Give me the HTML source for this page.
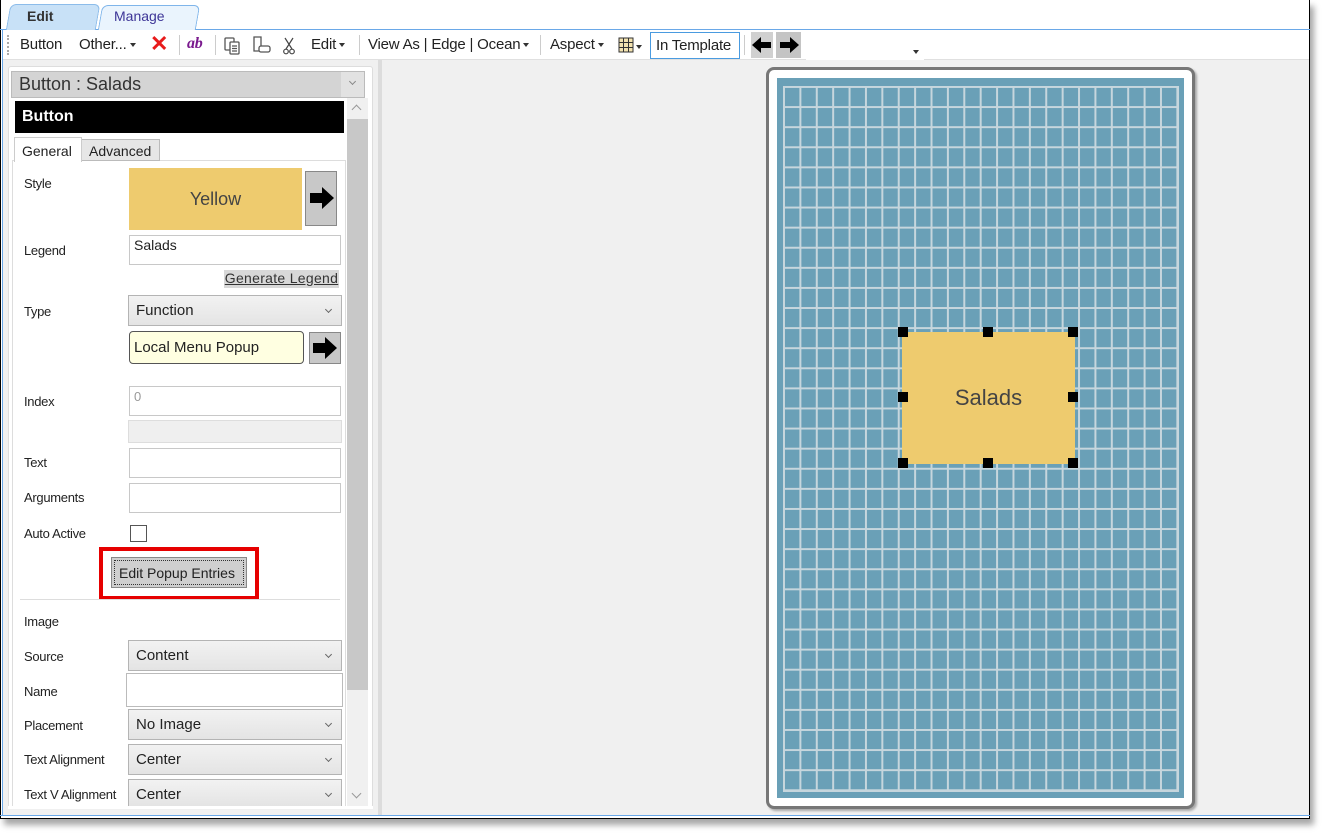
<!DOCTYPE html>
<html><head><meta charset="utf-8"><style>
*{box-sizing:border-box;margin:0;padding:0}
body{width:1324px;height:835px;background:#fff;position:relative;overflow:hidden;font-family:"Liberation Sans",sans-serif;font-size:14px;color:#222}
.a{position:absolute}
.win{left:0;top:0;width:1310px;height:819px;border:1px solid #000;border-top:none;background:#fff;box-shadow:4px 6px 6px rgba(0,0,0,.35)}
.lbl{position:absolute;left:24px;font-size:13px;color:#222;letter-spacing:-.3px}
.inp{position:absolute;left:129px;width:212px;background:#fff;border:1px solid #c8c8c8}
.sel{position:absolute;left:128px;width:214px;height:31px;background:linear-gradient(#f2f2f2,#e4e4e4);border:1px solid #b4b4b4;font-size:15px;padding:6px 0 0 7px}
.sel:after{content:"";position:absolute;right:10px;top:11px;width:4px;height:4px;border-right:1.3px solid #666;border-bottom:1.3px solid #666;transform:rotate(45deg)}
.arrowbtn{position:absolute;background:#c8c8c8;border:1px solid #888}
.h{position:absolute;width:10px;height:10px;background:#000}
.tb{position:absolute;top:36px;font-size:15px;color:#222;letter-spacing:-.2px}
.dd{display:inline-block;width:0;height:0;border-left:3.5px solid transparent;border-right:3.5px solid transparent;border-top:4px solid #333;vertical-align:middle;margin-left:3px}
.sep{position:absolute;top:35px;width:1px;height:20px;background:#ccc}
</style></head><body>
<div class="a win"></div>
<div class="a" style="left:0;top:29px;width:1310px;height:1px;background:#6aa8e8"></div>
<div class="a" style="left:2px;top:30px;width:1px;height:786px;background:#6aa8e8"></div>
<div class="a" style="left:0;top:815px;width:1310px;height:1px;background:#6aa8e8"></div>
<div class="a" style="left:100px;top:5px;width:98px;height:25px;background:#eaf4fd;border:1px solid #7fb5ea;border-bottom:none;border-radius:6px 6px 0 0;transform:skewX(-10deg)"></div>
<div class="a" style="left:114px;top:8px;font-size:14px;color:#3d3597">Manage</div>
<div class="a" style="left:8px;top:4px;width:90px;height:27px;background:#c8e1f7;border:1px solid #8cbcea;border-bottom:none;border-radius:6px 6px 0 0;transform:skewX(-10deg)"></div>
<div class="a" style="left:27px;top:8px;font-size:14px;font-weight:bold;color:#333">Edit</div>
<div class="a" style="left:3px;top:30px;width:1306px;height:30px;background:#fff;border-bottom:1px solid #e0e0e0"></div>
<div class="a" style="left:7px;top:35px;width:2px;height:20px;border-left:2px dotted #aaa"></div>
<div class="tb" style="left:20px">Button</div>
<div class="tb" style="left:79px">Other...<span class="dd"></span></div>
<div class="tb" style="left:150px;top:31px;color:#e81b1b;font-size:22px;font-weight:bold">✕</div>
<div class="sep" style="left:179px"></div>
<div class="tb" style="left:187px;color:#7a1a8e;font-weight:bold;font-style:italic;font-family:'Liberation Serif',serif;font-size:16px;top:35px">ab</div>
<div class="sep" style="left:215px"></div>
<svg class="a" style="left:223px;top:36px" width="20" height="20" viewBox="0 0 20 20" fill="none" stroke="#555" stroke-width="1.3"><rect x="2" y="2" width="9" height="12" rx="1"/><rect x="7" y="6" width="9" height="12" rx="1" fill="#fff"/><path d="M9 10h5M9 12.5h5M9 15h5"/></svg>
<svg class="a" style="left:251px;top:35px" width="22" height="20" viewBox="0 0 22 20" fill="none" stroke="#555" stroke-width="1.3"><path d="M3 2h7v14H3z"/><rect x="8" y="11" width="11" height="6" rx="2" fill="#fff"/></svg>
<svg class="a" style="left:283px;top:37px" width="12" height="18" fill="none" stroke="#444" stroke-width="1.2"><path d="M2 1l7 11M10 1L3 12"/><circle cx="3" cy="14.5" r="2.3"/><circle cx="9" cy="14.5" r="2.3"/></svg>
<div class="tb" style="left:311px">Edit<span class="dd"></span></div>
<div class="sep" style="left:359px"></div>
<div class="tb" style="left:368px">View As | Edge | Ocean<span class="dd"></span></div>
<div class="sep" style="left:540px"></div>
<div class="tb" style="left:550px">Aspect<span class="dd"></span></div>
<svg class="a" style="left:618px;top:37px" width="16" height="16"><rect x="1" y="1" width="14" height="14" fill="#f3e3b0" stroke="#333"/><path d="M5.5 1v14M10.5 1v14M1 5.5h14M1 10.5h14" stroke="#333"/></svg>
<div class="tb" style="left:633px;top:38px"><span class="dd"></span></div>
<div class="a" style="left:650px;top:32px;width:90px;height:27px;border:1px solid #4a9be0;background:#fff;padding:4px 0 0 5px;font-size:15px;letter-spacing:-.2px">In Template</div>
<div class="sep" style="left:744px"></div>
<div class="a" style="left:751px;top:32px;width:22px;height:26px;background:#d0d0d0"></div>
<div class="a" style="left:776px;top:32px;width:25px;height:26px;background:#c4c4c4"></div>
<svg class="a" style="left:751px;top:35px" width="50" height="20"><path d="M1 10l9-8v5h10v6H10v5z" fill="#000"/><path d="M48 10l-9-8v5H29v6h10v5z" fill="#000"/></svg>
<div class="a" style="left:806px;top:32px;width:118px;height:28px;background:#fff"></div>
<div class="a" style="left:910px;top:43px"><span class="dd"></span></div>
<!-- left panel -->
<div class="a" style="left:3px;top:60px;width:375px;height:755px;background:#f0f0f0"></div>
<div class="a" style="left:378px;top:60px;width:4px;height:755px;background:#dcdcdc"></div>
<div class="a" style="left:382px;top:60px;width:927px;height:755px;background:#f0f0f0"></div>
<div class="a" style="left:8px;top:66px;width:365px;height:742px;background:#fff;border:1px solid #ddd;border-radius:3px"></div>
<div class="a" style="left:11px;top:71px;width:354px;height:27px;background:#d4d4d4;border:1px solid #bbb;font-size:18px;padding:2px 0 0 7px;color:#333">Button : Salads</div>
<div class="a" style="left:341px;top:72px;width:23px;height:25px;background:#e2e2e2"></div>
<div class="a" style="left:350px;top:79px;width:5px;height:5px;border-right:1.3px solid #888;border-bottom:1.3px solid #888;transform:rotate(45deg)"></div>
<div class="a" style="left:15px;top:101px;width:329px;height:32px;background:#000;color:#fff;font-weight:bold;font-size:16px;padding:7px 0 0 7px">Button</div>
<div class="a" style="left:347px;top:98px;width:21px;height:708px;background:#f0f0f0"></div>
<div class="a" style="left:347px;top:119px;width:21px;height:571px;background:#c8c8c8"></div>
<div class="a" style="left:353px;top:106px;width:7px;height:7px;border-left:1.3px solid #999;border-top:1.3px solid #999;transform:rotate(45deg)"></div>
<div class="a" style="left:353px;top:790px;width:7px;height:7px;border-right:1.3px solid #999;border-bottom:1.3px solid #999;transform:rotate(45deg)"></div>
<div class="a" style="left:12px;top:160px;width:334px;height:646px;border-left:1px solid #ddd;border-right:1px solid #ddd;border-top:1px solid #ddd"></div>
<div class="a" style="left:81px;top:139px;width:79px;height:22px;background:#e6e6e6;border:1px solid #bbb;font-size:14px;padding:3px 0 0 7px">Advanced</div>
<div class="a" style="left:14px;top:137px;width:68px;height:25px;background:#fff;border:1px solid #ccc;border-bottom:none;font-size:14px;padding:5px 0 0 7px">General</div>
<div class="lbl" style="top:176px">Style</div>
<div class="a" style="left:129px;top:168px;width:173px;height:62px;background:#eecb6e;text-align:center;font-size:18px;line-height:62px;color:#444">Yellow</div>
<div class="arrowbtn" style="left:305px;top:171px;width:32px;height:55px"></div>
<svg class="a" style="left:309px;top:186px" width="26" height="24"><path d="M1 7h12V1l12 11-12 11v-6H1z" fill="#000"/></svg>
<div class="lbl" style="top:243px">Legend</div>
<div class="inp" style="top:235px;height:30px;font-size:14px;padding:1px 4px">Salads</div>
<div class="a" style="left:224px;top:270px;width:115px;height:18px;background:#d8d8d8;font-size:14px;text-decoration:underline;color:#333;text-align:center;letter-spacing:.3px">Generate Legend</div>
<div class="lbl" style="top:304px">Type</div>
<div class="sel" style="top:295px">Function</div>
<div class="a" style="left:129px;top:331px;width:175px;height:33px;background:#ffffe1;border:1px solid #555;border-radius:4px;font-size:15px;padding:7px 0 0 4px">Local Menu Popup</div>
<div class="arrowbtn" style="left:309px;top:332px;width:32px;height:32px"></div>
<svg class="a" style="left:312px;top:336px" width="26" height="24"><path d="M1 7h12V1l12 11-12 11v-6H1z" fill="#000"/></svg>
<div class="lbl" style="top:394px">Index</div>
<div class="inp" style="top:386px;height:30px;font-size:13px;color:#999;padding:2px 4px">0</div>
<div class="a" style="left:128px;top:420px;width:214px;height:23px;background:#efefef;border:1px solid #ddd"></div>
<div class="lbl" style="top:455px">Text</div>
<div class="inp" style="top:448px;height:30px"></div>
<div class="lbl" style="top:490px">Arguments</div>
<div class="inp" style="top:483px;height:30px"></div>
<div class="lbl" style="top:526px">Auto Active</div>
<div class="a" style="left:130px;top:525px;width:17px;height:17px;border:1px solid #555;background:#fff"></div>
<div class="a" style="left:99px;top:547px;width:160px;height:53px;border:4px solid #e60000"></div>
<div class="a" style="left:111px;top:557px;width:136px;height:31px;background:#cfcfcf;border:1px solid #888;font-size:14px;padding:7px 0 0 7px"><div style="position:absolute;inset:2px;border:1px dotted #333"></div>Edit Popup Entries</div>
<div class="a" style="left:20px;top:599px;width:320px;height:1px;background:#ddd"></div>
<div class="lbl" style="top:614px">Image</div>
<div class="lbl" style="top:649px">Source</div>
<div class="sel" style="top:640px">Content</div>
<div class="lbl" style="top:684px">Name</div>
<div class="a" style="left:126px;top:673px;width:217px;height:34px;background:#fff;border:1px solid #bbb"></div>
<div class="lbl" style="top:718px">Placement</div>
<div class="sel" style="top:709px">No Image</div>
<div class="lbl" style="top:752px">Text Alignment</div>
<div class="sel" style="top:744px">Center</div>
<div class="lbl" style="top:787px">Text V Alignment</div>
<div class="sel" style="top:779px;height:28px">Center</div>
<div class="a" style="left:8px;top:806px;width:365px;height:3px;background:#fff"></div>
<!-- canvas -->
<div class="a" style="left:766px;top:67px;width:429px;height:742px;background:#fff;border:3px solid #777;border-radius:8px;box-shadow:2px 2px 2px rgba(0,0,0,.3)"></div>
<div class="a" style="left:777px;top:78px;width:407px;height:720px;background:#6aa0b7"></div>
<div class="a" style="left:783px;top:86px;width:396px;height:706px;background-image:linear-gradient(to right,#c6d6dd 2px,transparent 2px),linear-gradient(to bottom,#c6d6dd 2px,transparent 2px);background-size:16.4px 20.1px"></div>
<div class="a" style="left:1177px;top:86px;width:2px;height:706px;background:#c6d6dd"></div>
<div class="a" style="left:783px;top:790px;width:396px;height:2px;background:#c6d6dd"></div>
<div class="a" style="left:902px;top:332px;width:173px;height:132px;background:#eecb6e;text-align:center;line-height:132px;font-size:22px;color:#444">Salads</div>
<div class="h" style="left:898px;top:327px"></div><div class="h" style="left:983px;top:327px"></div><div class="h" style="left:1068px;top:327px"></div>
<div class="h" style="left:898px;top:392px"></div><div class="h" style="left:1068px;top:392px"></div>
<div class="h" style="left:898px;top:458px"></div><div class="h" style="left:983px;top:458px"></div><div class="h" style="left:1068px;top:458px"></div>
</body></html>
